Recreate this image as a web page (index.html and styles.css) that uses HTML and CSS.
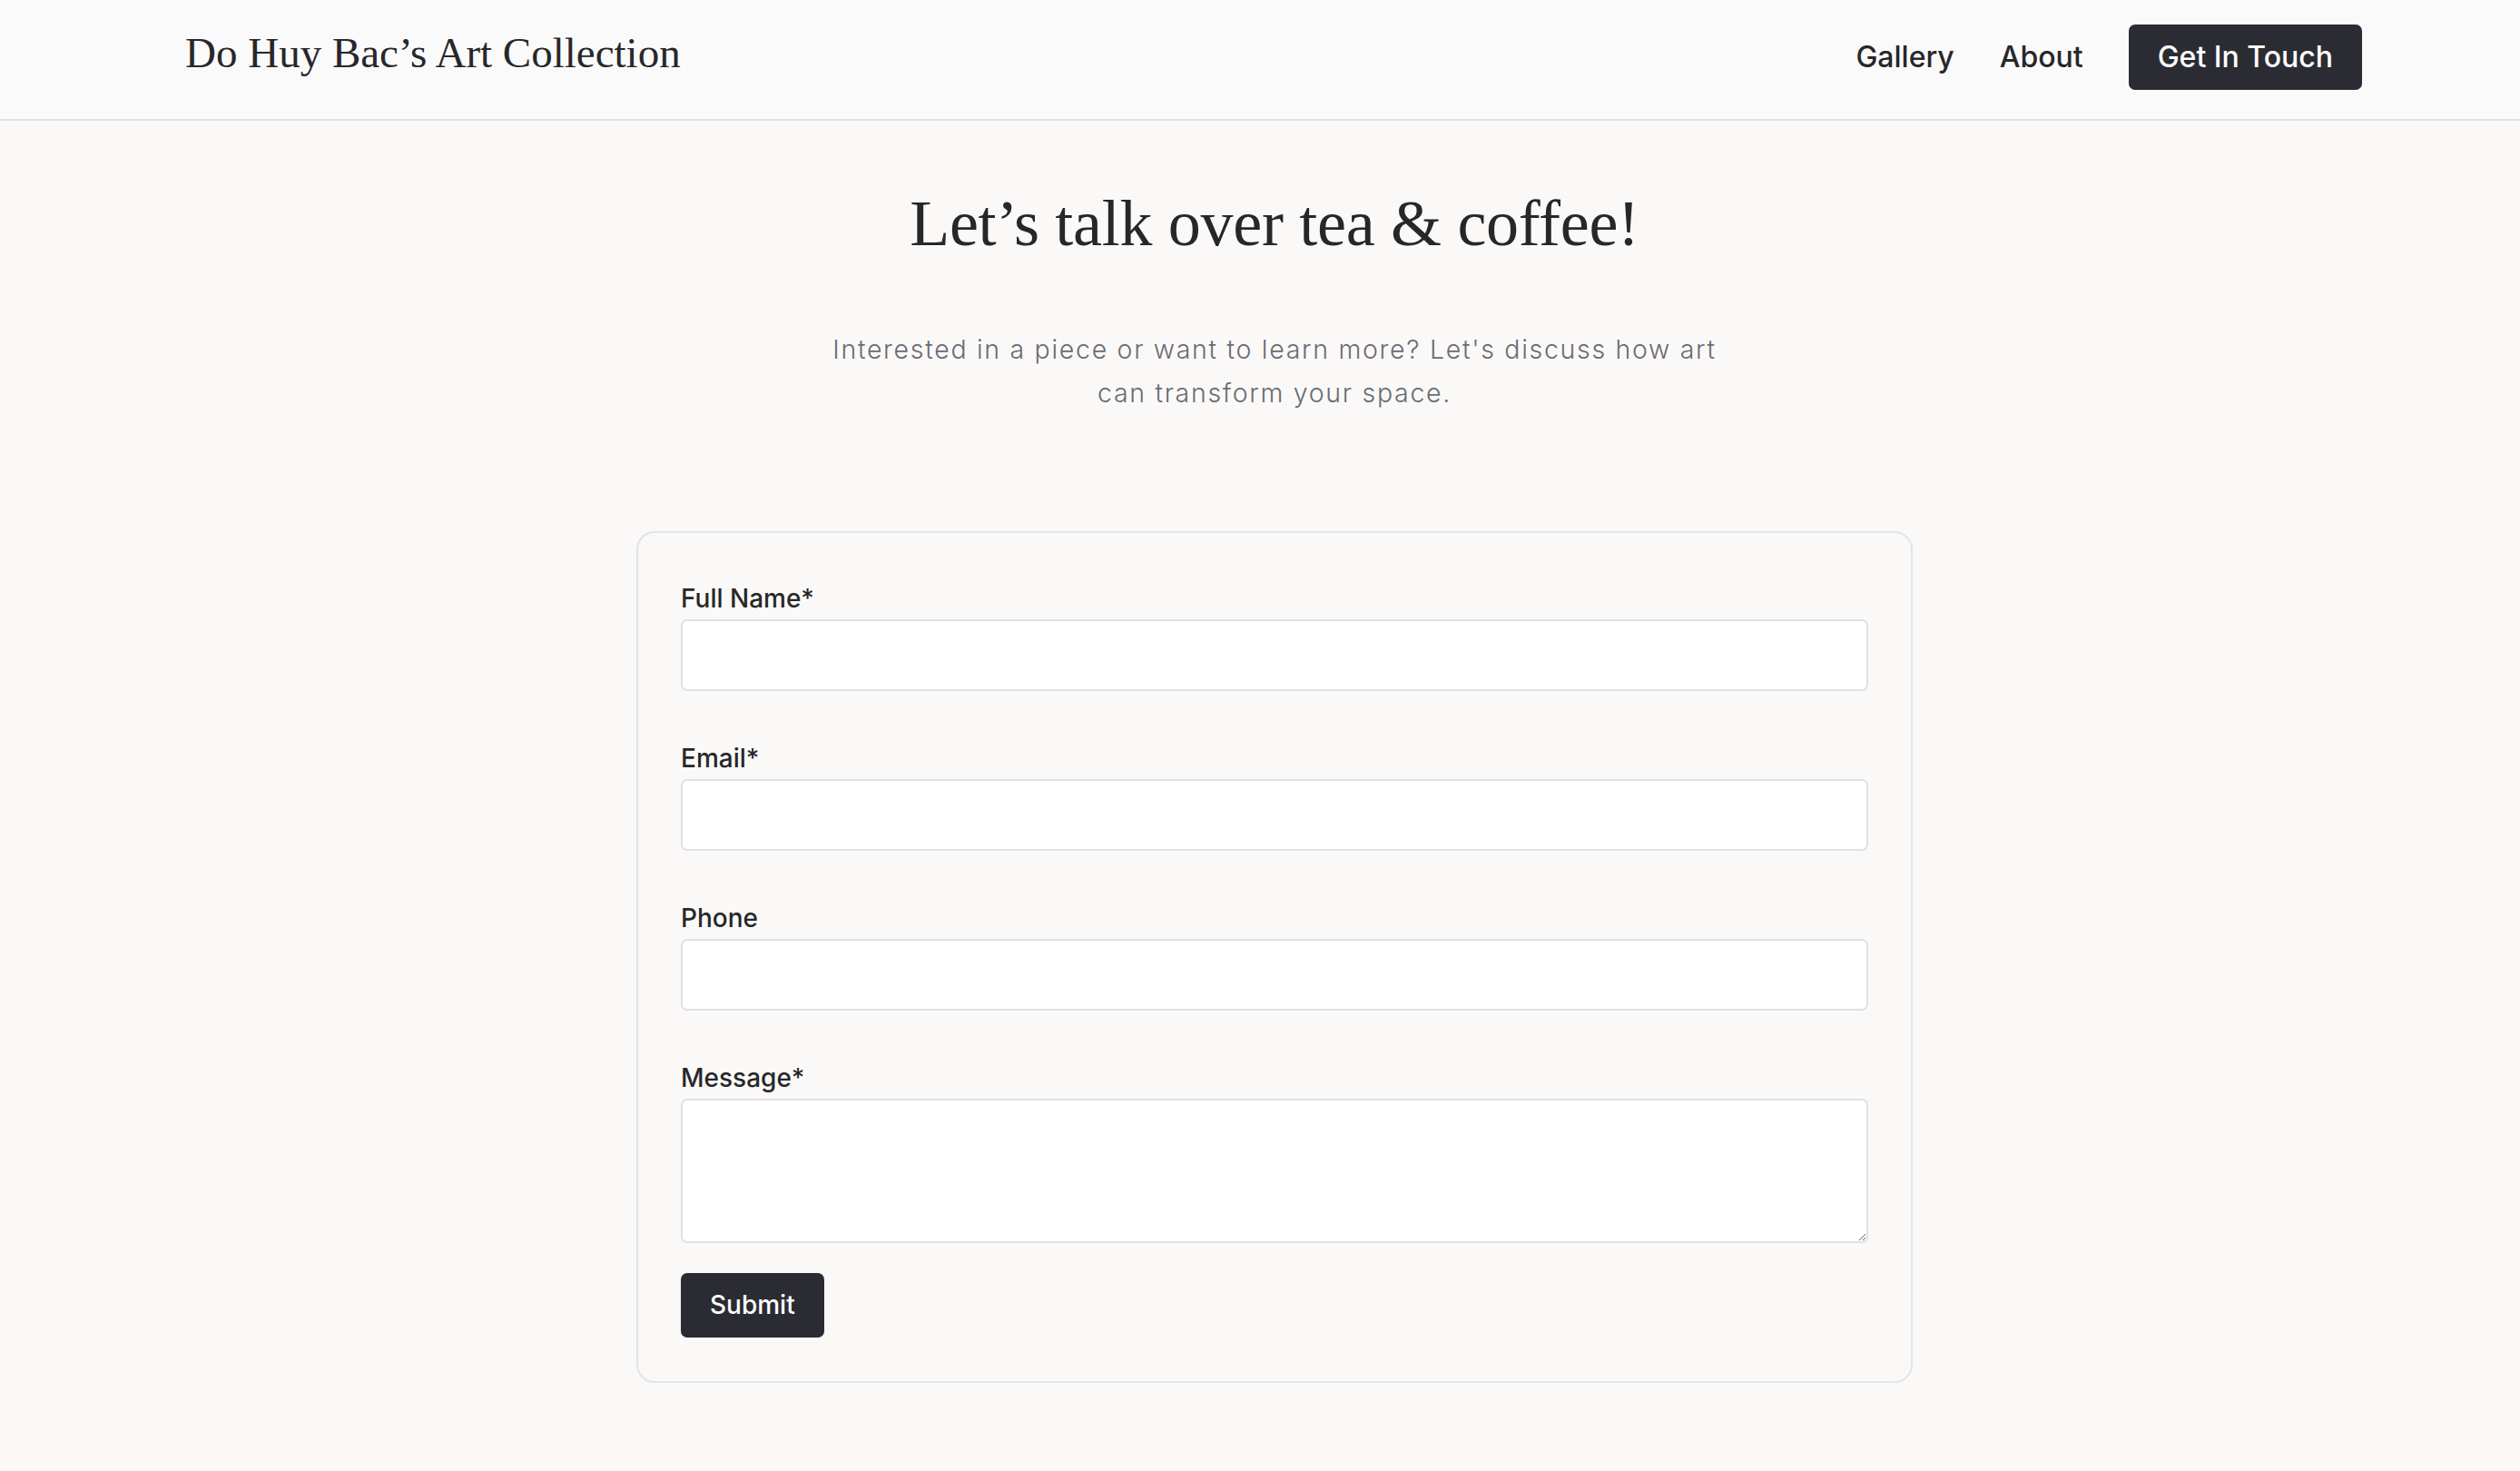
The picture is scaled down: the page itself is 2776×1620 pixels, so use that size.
FILE: index.html
```html
<!DOCTYPE html>
<html lang="en">
<head>
<meta charset="utf-8">
<title>Contact — Do Huy Bac’s Art Collection</title>
<link rel="stylesheet" href="styles.css">
</head>
<body>
<header class="site-header">
  <a class="logo" href="#">Do Huy Bac’s Art Collection</a>
  <nav class="nav">
    <a class="nav-link" href="#">Gallery</a>
    <a class="nav-link" href="#">About</a>
    <a class="nav-cta" href="#">Get In Touch</a>
  </nav>
</header>
<main class="main">
  <section class="intro">
    <h1 class="title">Let’s talk over tea &amp; coffee!</h1>
    <p class="lead">Interested in a piece or want to learn more? Let's discuss how art can transform your space.</p>
  </section>
  <form class="card" onsubmit="return false">
    <div class="fields">
      <div class="field">
        <label class="label" for="name">Full Name*</label>
        <input class="input" id="name" type="text">
      </div>
      <div class="field">
        <label class="label" for="email">Email*</label>
        <input class="input" id="email" type="email">
      </div>
      <div class="field">
        <label class="label" for="phone">Phone</label>
        <input class="input" id="phone" type="tel">
      </div>
      <div class="field">
        <label class="label" for="message">Message*</label>
        <textarea class="input textarea" id="message"></textarea>
      </div>
    </div>
    <button class="submit" type="submit">Submit</button>
  </form>
</main>
</body>
</html>
```

FILE: styles.css
```css
* { box-sizing: border-box; }

html, body {
  margin: 0;
  padding: 0;
}

body {
  background: #faf9f7;
  color: #27272a;
  font-family: Inter, "Noto Sans", sans-serif;
  min-height: 1620px;
}

a { text-decoration: none; color: inherit; }

.site-header {
  display: flex;
  justify-content: space-between;
  align-items: baseline;
  padding: 27px 174px 32px 204px;
  background: #fafafa;
  border-bottom: 2px solid #e2e2e3;
}

.logo {
  font-family: "Liberation Serif", "Times New Roman", serif;
  font-size: 47px;
  letter-spacing: 0;
  color: #27272a;
}

.nav {
  display: flex;
  align-items: baseline;
  gap: 50px;
}

.nav-link {
  font-size: 32px;
  line-height: 48px;
  font-weight: 500;
  color: #27272a;
}

.nav-cta {
  font-size: 32px;
  line-height: 48px;
  font-weight: 500;
  color: #ffffff;
  background: #2b2c33;
  padding: 12px 32px;
  border-radius: 7px;
}

.main {
  padding-left: 32px;
  display: flex;
  flex-direction: column;
  align-items: center;
}

.intro {
  display: flex;
  flex-direction: column;
  align-items: center;
  text-align: center;
}

.title {
  margin: 70px 0 0;
  font-family: "Liberation Serif", "Times New Roman", serif;
  font-weight: 400;
  font-size: 72px;
  line-height: 86px;
  letter-spacing: -0.3px;
  color: #27272a;
}

.lead {
  margin: 72px 0 0;
  max-width: 1000px;
  font-size: 28.5px;
  line-height: 48px;
  font-weight: 300;
  letter-spacing: 1.7px;
  color: #6b6b75;
}

.card {
  margin-top: 128px;
  width: 1406px;
  padding: 52px 47px 48px;
  border: 2px solid #e4e3e6;
  border-radius: 20px;
  background: #faf9f7;
  display: flex;
  flex-direction: column;
  align-items: flex-start;
}

.fields {
  width: 100%;
  display: flex;
  flex-direction: column;
  gap: 54px;
}

.field {
  display: flex;
  flex-direction: column;
}

.label {
  font-size: 28px;
  line-height: 40px;
  font-weight: 500;
  color: #27272a;
  margin-bottom: 3px;
}

.input {
  display: block;
  width: 100%;
  height: 79px;
  border: 2px solid #e1e1e4;
  border-radius: 7px;
  background: #ffffff;
  font-family: Inter, sans-serif;
  font-size: 28px;
  padding: 0 20px;
  outline: none;
}

.textarea {
  height: 159px;
  padding: 16px 20px;
  resize: vertical;
}

.submit {
  margin-top: 33px;
  font-family: Inter, sans-serif;
  font-size: 28px;
  line-height: 43px;
  font-weight: 500;
  color: #ffffff;
  background: #2b2c33;
  border: none;
  border-radius: 7px;
  padding: 14px 32px;
  cursor: pointer;
}
```
